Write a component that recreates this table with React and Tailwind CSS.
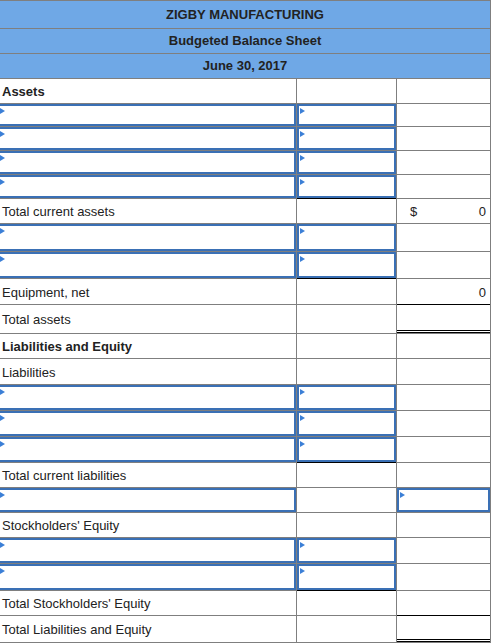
import React from "react";

const G = "border-[#7f7f7f]";

function Tri({ edge }) {
  return (
    <span
      className={
        "absolute top-[2px] w-0 h-0 border-y-[3px] border-y-transparent border-l-[5px] border-l-[#3b7fd6] " +
        (edge ? "left-0" : "left-[1px]")
      }
    />
  );
}

function Cell({ kind, children, right }) {
  let inner = null;
  if (kind === "input") {
    inner = (
      <div className="relative h-full border-2 border-[#3a70b5]">
        <Tri />
      </div>
    );
  } else if (kind === "top") {
    inner = (
      <div className="-mt-px h-[calc(100%+1px)] pt-[2px] border-t border-black flex items-center justify-end pr-[4px]">{children}</div>
    );
  } else if (kind === "dbl") {
    inner = (
      <div className="-mt-px h-[calc(100%+1px)] border-t border-black border-b-[3px] border-double flex items-center justify-end pr-[4px]">{children}</div>
    );
  } else {
    inner = (
      <div className={"h-full pt-[2px] flex items-center " + (right ? "justify-between pl-[13px] pr-[4px]" : "justify-end pr-[4px]")}>{children}</div>
    );
  }
  return <div className={"border-r border-b " + G}>{inner}</div>;
}

function Row({ h, label, bold, c1, c2, c3, v2, v3, dollar }) {
  return (
    <div className="grid grid-cols-[297px_100px_94px]" style={{ height: h }}>
      <div className={"border-r border-b " + G}>
        {c1 === "input" ? (
          <div className="relative h-full border-2 border-l-0 border-[#3a70b5]">
            <Tri edge />
          </div>
        ) : (
          <div className={"h-full pt-[2px] flex items-center pl-[2px] " + (bold ? "font-bold" : "")}>{label}</div>
        )}
      </div>
      <Cell kind={c2}>{v2}</Cell>
      <Cell kind={c3} right={dollar}>
        {dollar ? (
          <>
            <span>$</span>
            <span>{v3}</span>
          </>
        ) : (
          v3
        )}
      </Cell>
    </div>
  );
}

const rows = [
  { h: 25, label: "Assets", bold: true },
  { h: 23, c1: "input", c2: "input" },
  { h: 24, c1: "input", c2: "input" },
  { h: 24, c1: "input", c2: "input" },
  { h: 24, c1: "input", c2: "input" },
  { h: 25, label: "Total current assets", c2: "top", v3: "0", dollar: true },
  { h: 28, c1: "input", c2: "input" },
  { h: 27, c1: "input", c2: "input" },
  { h: 26, label: "Equipment, net", c2: "top", v3: "0" },
  { h: 29, label: "Total assets", c3: "dbl" },
  { h: 25, label: "Liabilities and Equity", bold: true },
  { h: 26, label: "Liabilities" },
  { h: 26, c1: "input", c2: "input" },
  { h: 26, c1: "input", c2: "input" },
  { h: 26, c1: "input", c2: "input" },
  { h: 25, label: "Total current liabilities", c2: "top" },
  { h: 25, c1: "input", c3: "input" },
  { h: 25, label: "Stockholders' Equity" },
  { h: 26, c1: "input", c2: "input" },
  { h: 27, c1: "input", c2: "input" },
  { h: 25, label: "Total Stockholders' Equity", c2: "top" },
  { h: 27, label: "Total Liabilities and Equity", c3: "dbl" },
];

export default function App() {
  return (
    <div
      className="w-[492px] h-[644px] bg-white text-[13px] text-[#222] overflow-hidden"
      style={{ fontFamily: '"Liberation Sans", Arial, sans-serif' }}
    >
      <div className="w-[491px]">
        <div className={"h-[29px] bg-[#6fa8e6] border-t border-b border-r font-bold flex items-center justify-center " + G}>
          ZIGBY MANUFACTURING
        </div>
        <div className={"h-[25px] bg-[#6fa8e6] border-b border-r font-bold flex items-center justify-center " + G}>
          Budgeted Balance Sheet
        </div>
        <div className={"h-[25px] bg-[#6fa8e6] border-b border-r font-bold flex items-center justify-center " + G}>
          June 30, 2017
        </div>
        {rows.map((r, i) => (
          <Row key={i} {...r} />
        ))}
      </div>
    </div>
  );
}
